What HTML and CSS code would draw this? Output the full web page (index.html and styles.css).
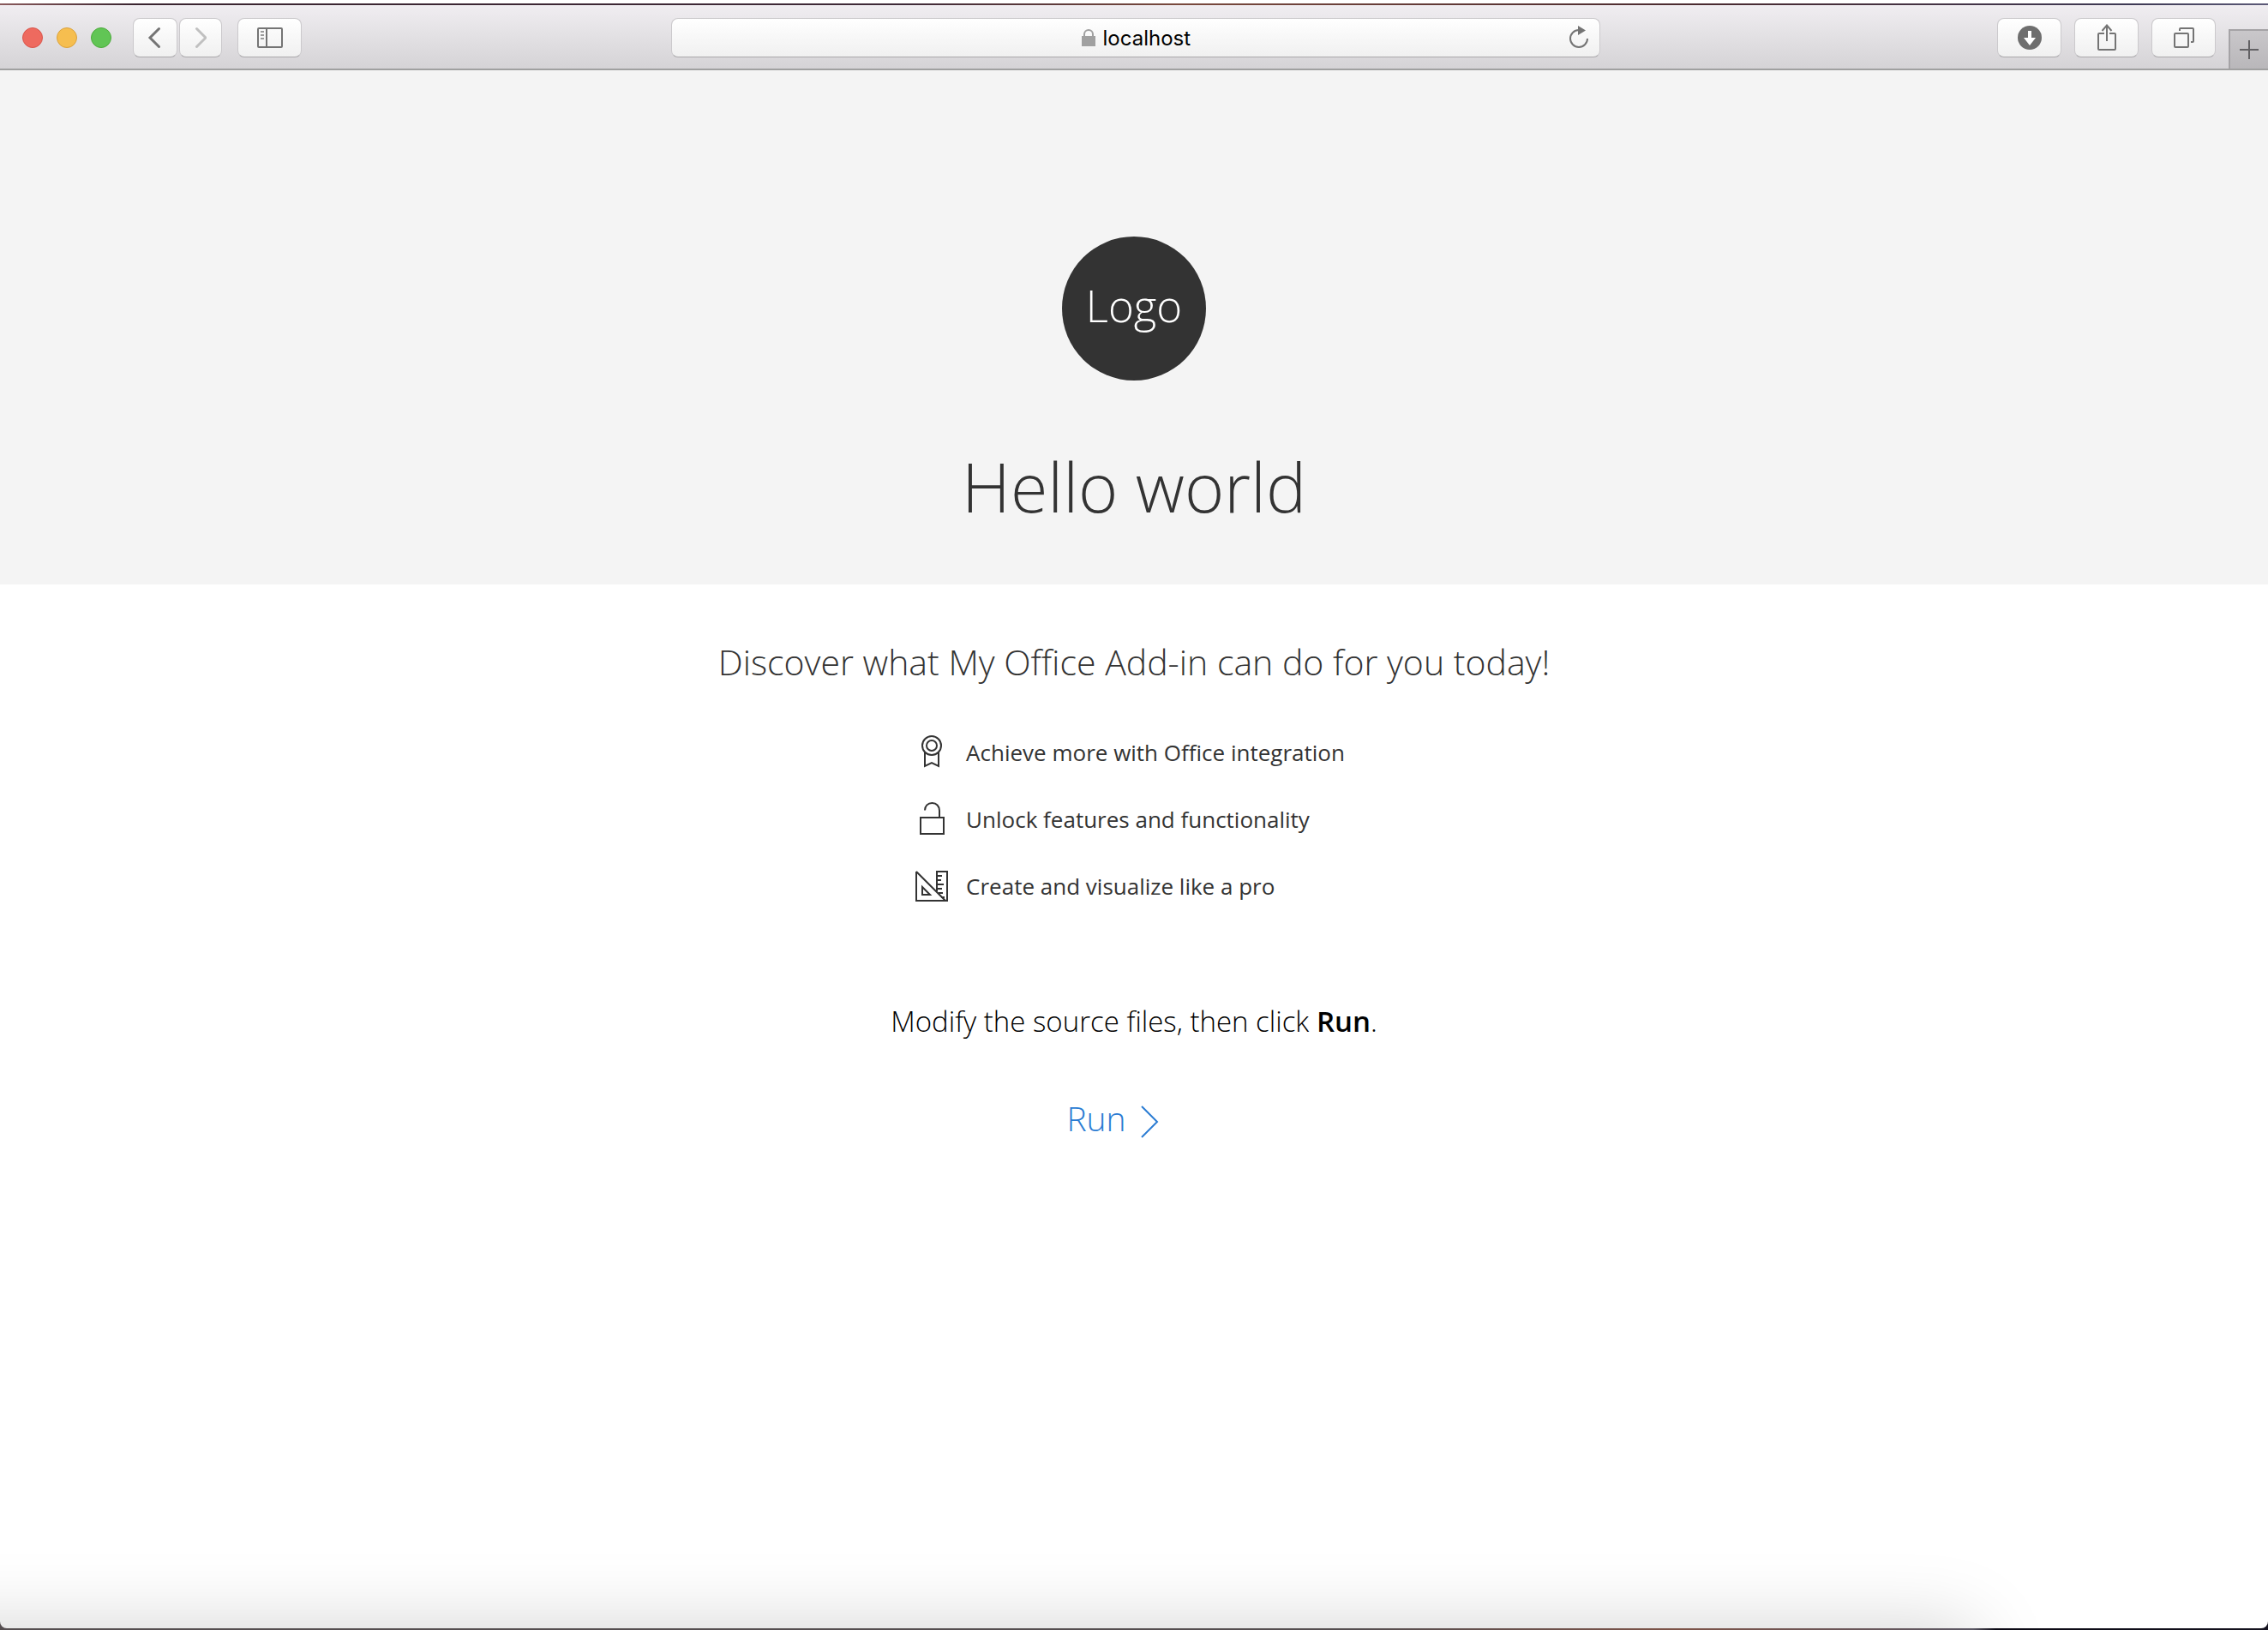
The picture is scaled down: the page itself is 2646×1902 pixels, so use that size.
FILE: index.html
```html
<!DOCTYPE html>
<html lang="en">
<head>
<meta charset="utf-8">
<title>localhost</title>
<link rel="stylesheet" href="styles.css">
</head>
<body>
<div class="window">
  <header class="toolbar">
    <div class="tools">
      <div class="lights">
        <button class="light close" aria-label="Close"></button>
        <button class="light minimize" aria-label="Minimize"></button>
        <button class="light expand" aria-label="Full screen"></button>
      </div>
      <div class="history">
        <button class="tool back" aria-label="Back"><svg width="18" height="26" viewBox="0 0 18 26"><path d="M13.500 2.500L3 13l10.500 10.500" fill="none" stroke="#747474" stroke-width="3" stroke-linecap="round"/></svg></button>
        <button class="tool forward" aria-label="Forward" disabled><svg width="14" height="26" viewBox="0 0 14 26"><path d="M2.500 2.500L13 13 2.500 23.500" fill="none" stroke="#c0c0c0" stroke-width="3" stroke-linecap="round"/></svg></button>
      </div>
      <button class="tool" aria-label="Sidebar"><svg width="30" height="24" viewBox="0 0 30 24" fill="none" stroke="#747474" stroke-width="2"><rect x="1" y="1" width="28" height="22" rx="1"/><path d="M11 1v22"/><path d="M4 5h4M4 9h4M4 13h4" stroke="#9a9a9a"/></svg></button>
    </div>
    <form class="address">
      <svg width="16" height="20" viewBox="0 0 16 20"><path d="M3 9V6a5 5 0 0 1 10 0v3" fill="none" stroke="#a0a0a0" stroke-width="2"/><path d="M0 8h16v12H0z" fill="#a0a0a0"/></svg>
      <input class="url" type="text" value="localhost" aria-label="Address">
      <button class="reload" type="button" aria-label="Reload"><svg width="24" height="28" viewBox="0 0 24 28"><path d="M22 15a10 10 0 1 1-10-10" fill="none" stroke="#747474" stroke-width="2"/><path d="M11 0l9 5.500-9 5.500z" fill="#747474"/></svg></button>
    </form>
    <div class="tools end">
      <button class="tool" aria-label="Downloads"><svg width="28" height="28" viewBox="0 0 28 28"><circle cx="14" cy="14" r="14" fill="#6e6e6e"/><path d="M12 6h4v8h5l-7 9-7-9h5z" fill="#fff"/></svg></button>
      <button class="tool" aria-label="Share"><svg width="24" height="32" viewBox="0 0 24 32" fill="none" stroke="#747474" stroke-width="2"><path d="M9 11H3q-1 0-1 1v17q0 1 1 1h18q1 0 1-1V12q0-1-1-1h-6M12 20V1M6.500 8L12 1.500 17.500 8"/></svg></button>
      <button class="tool" aria-label="Show all tabs"><svg width="24" height="24" viewBox="0 0 24 24" fill="none" stroke="#747474" stroke-width="2"><rect x="1" y="7" width="16" height="16" rx="1"/><path d="M7 4V2q0-1 1-1h14q1 0 1 1v14q0 1-1 1h-2"/></svg></button>
      <button class="newtab" aria-label="New tab"><svg width="22" height="22" viewBox="0 0 22 22"><path d="M11 0v22M0 11h22" stroke="#626164" stroke-width="2"/></svg></button>
    </div>
  </header>
  <div class="page">
    <section class="hero">
      <div class="logo">Logo</div>
      <h1 class="title">Hello world</h1>
    </section>
    <main class="content">
      <h2 class="lead">Discover what My Office Add-in can do for you today!</h2>
      <ul class="features">
        <li class="feature"><svg width="40" height="40" viewBox="0 0 40 40" fill="none" stroke="#333" stroke-width="2"><circle cx="20" cy="12" r="11"/><circle cx="20" cy="12" r="6"/><path d="M12 20v16l8-4 8 4V20"/></svg>Achieve more with Office integration</li>
        <li class="feature"><svg width="40" height="40" viewBox="0 0 40 40" fill="none" stroke="#333" stroke-width="2"><rect x="7" y="18" width="27" height="19"/><path d="M12 9.500C12 4.500 15.500 1 20.500 1S29 4.500 29 10v8"/></svg>Unlock features and functionality</li>
        <li class="feature"><svg width="40" height="40" viewBox="0 0 40 40" fill="none" stroke="#333" stroke-width="2"><path d="M2 3v34h36V3H26v23M2 3l34 34M9 21v9h9zM26 8h6M26 13h5M26 18h8M27 23h5M28 28h5M31 33h4"/></svg>Create and visualize like a pro</li>
      </ul>
      <p class="hint">Modify the source files, then click <b>Run</b>.</p>
      <button class="run">Run<svg width="22" height="42" viewBox="0 0 22 42"><path d="M2 2l18 18L2 38" fill="none" stroke="#2b7cd3" stroke-width="2"/></svg></button>
    </main>
    <div class="shade"></div>
  </div>
</div>
</body>
</html>
```
FILE: styles.css
```css
* { box-sizing: border-box; }

body {
  margin: 0;
  background: linear-gradient(90deg, #554e50 0, #554e50 60%, #7d5348 74%, #5b5763 87%, #0b0914 88%, #15131f 100%);
  font-family: "Open Sans", "Noto Sans", sans-serif;
  color: #333;
}

button {
  margin: 0;
  padding: 0;
  border: 0;
  background: none;
  font: inherit;
  color: inherit;
}

svg { display: block; flex: none; }

.window {
  display: flex;
  flex-direction: column;
  min-height: 100vh;
  padding-bottom: 2px;
  border-top: 4px solid #fff;
}

/* Browser toolbar */
.toolbar {
  display: grid;
  grid-template-columns: 1fr 41% 1fr;
  align-items: start;
  height: 78px;
  padding: 17px 0 0 4px;
  border-bottom: 2px solid #a0a0a0;
  background:
    linear-gradient(90deg, #8a5a5c 0, #3a2430 6%, #3f2a38 40%, #7a4a3e 52%, #4a2a30 75%, #3f3a55 94%, #5c5a78 100%) top / 100% 2px no-repeat,
    linear-gradient(#f1eef2, #e4e2e5 45%, #d5d3d6);
}

.tools {
  display: flex;
  align-items: center;
  gap: 18px;
  padding-left: 22px;
}

.tools.end {
  justify-content: flex-end;
  align-items: flex-start;
  gap: 15px;
  padding-left: 0;
}

.lights {
  display: flex;
  gap: 16px;
  padding-right: 7px;
}

.light {
  width: 24px;
  height: 24px;
  border: 1px solid;
  border-radius: 50%;
}

.close { background: #ee6a5f; border-color: #d9554b; }
.minimize { background: #f6be4f; border-color: #dba23c; }
.expand { background: #61c555; border-color: #4dab3c; }

.history { display: flex; gap: 2px; }

.tool,
.address {
  display: flex;
  align-items: center;
  justify-content: center;
  height: 46px;
  border: 1px solid #cbc9cc;
  border-bottom-color: #a9a7aa;
  border-radius: 8px;
  background: linear-gradient(#fff, #f0f0f0);
}

.tool { width: 75px; }
.back { width: 52px; }
.forward { width: 50px; }

.address {
  position: relative;
  gap: 9px;
  margin: 0;
}

.url {
  width: 102px;
  padding: 2px 0 0;
  border: 0;
  background: none;
  font: 24px/30px Inter, "Liberation Sans", sans-serif;
  color: #000;
}

.reload {
  position: absolute;
  top: 8px;
  right: 12px;
}

.newtab {
  display: flex;
  align-items: center;
  justify-content: center;
  width: 46px;
  height: 46px;
  margin-top: 13px;
  border: 2px solid #a5a3a6;
  border-width: 2px 0 0 2px;
  background: linear-gradient(#c9c7ca, #b9b7ba);
}

/* Add-in page */
.page {
  position: relative;
  flex: 1;
  overflow: hidden;
  border-radius: 0 0 8px 8px;
  background: #fff;
}

.hero {
  display: flex;
  flex-direction: column;
  align-items: center;
  padding: 194px 0 60px;
  background: #f4f4f4;
}

.logo {
  display: flex;
  align-items: center;
  justify-content: center;
  width: 168px;
  height: 168px;
  padding-bottom: 8px;
  border-radius: 50%;
  background: #333;
  font-size: 51px;
  font-weight: 300;
  color: #fff;
}

.title {
  margin: 70px 0 0;
  font-size: 79px;
  font-weight: 300;
  line-height: 108px;
}

.content {
  display: flex;
  flex-direction: column;
  align-items: center;
  padding-top: 62px;
}

.lead {
  margin: 0;
  font-size: 41px;
  font-weight: 330;
  line-height: 56px;
}

.features {
  display: grid;
  gap: 38px;
  margin: 58px 0 0;
  padding: 0 10px 0 0;
  list-style: none;
}

.feature {
  display: flex;
  align-items: center;
  gap: 20px;
  height: 40px;
  font-size: 26px;
  line-height: 36px;
}

.hint {
  margin: 115px 0 0;
  font-size: 33px;
  font-weight: 330;
  line-height: 45px;
  color: #000;
}

.hint b { font-weight: 600; }

.run {
  display: flex;
  align-items: flex-end;
  gap: 16px;
  margin-top: 64px;
  padding-right: 50px;
  font-size: 39px;
  font-weight: 300;
  line-height: 53px;
  color: #2b7cd3;
}

/* Shadow that a window behind casts along the bottom edge */
.shade {
  position: absolute;
  left: -200px;
  right: 13%;
  bottom: -200px;
  height: 200px;
  box-shadow: 0 0 90px rgba(0, 0, 0, 0.18);
}
```
